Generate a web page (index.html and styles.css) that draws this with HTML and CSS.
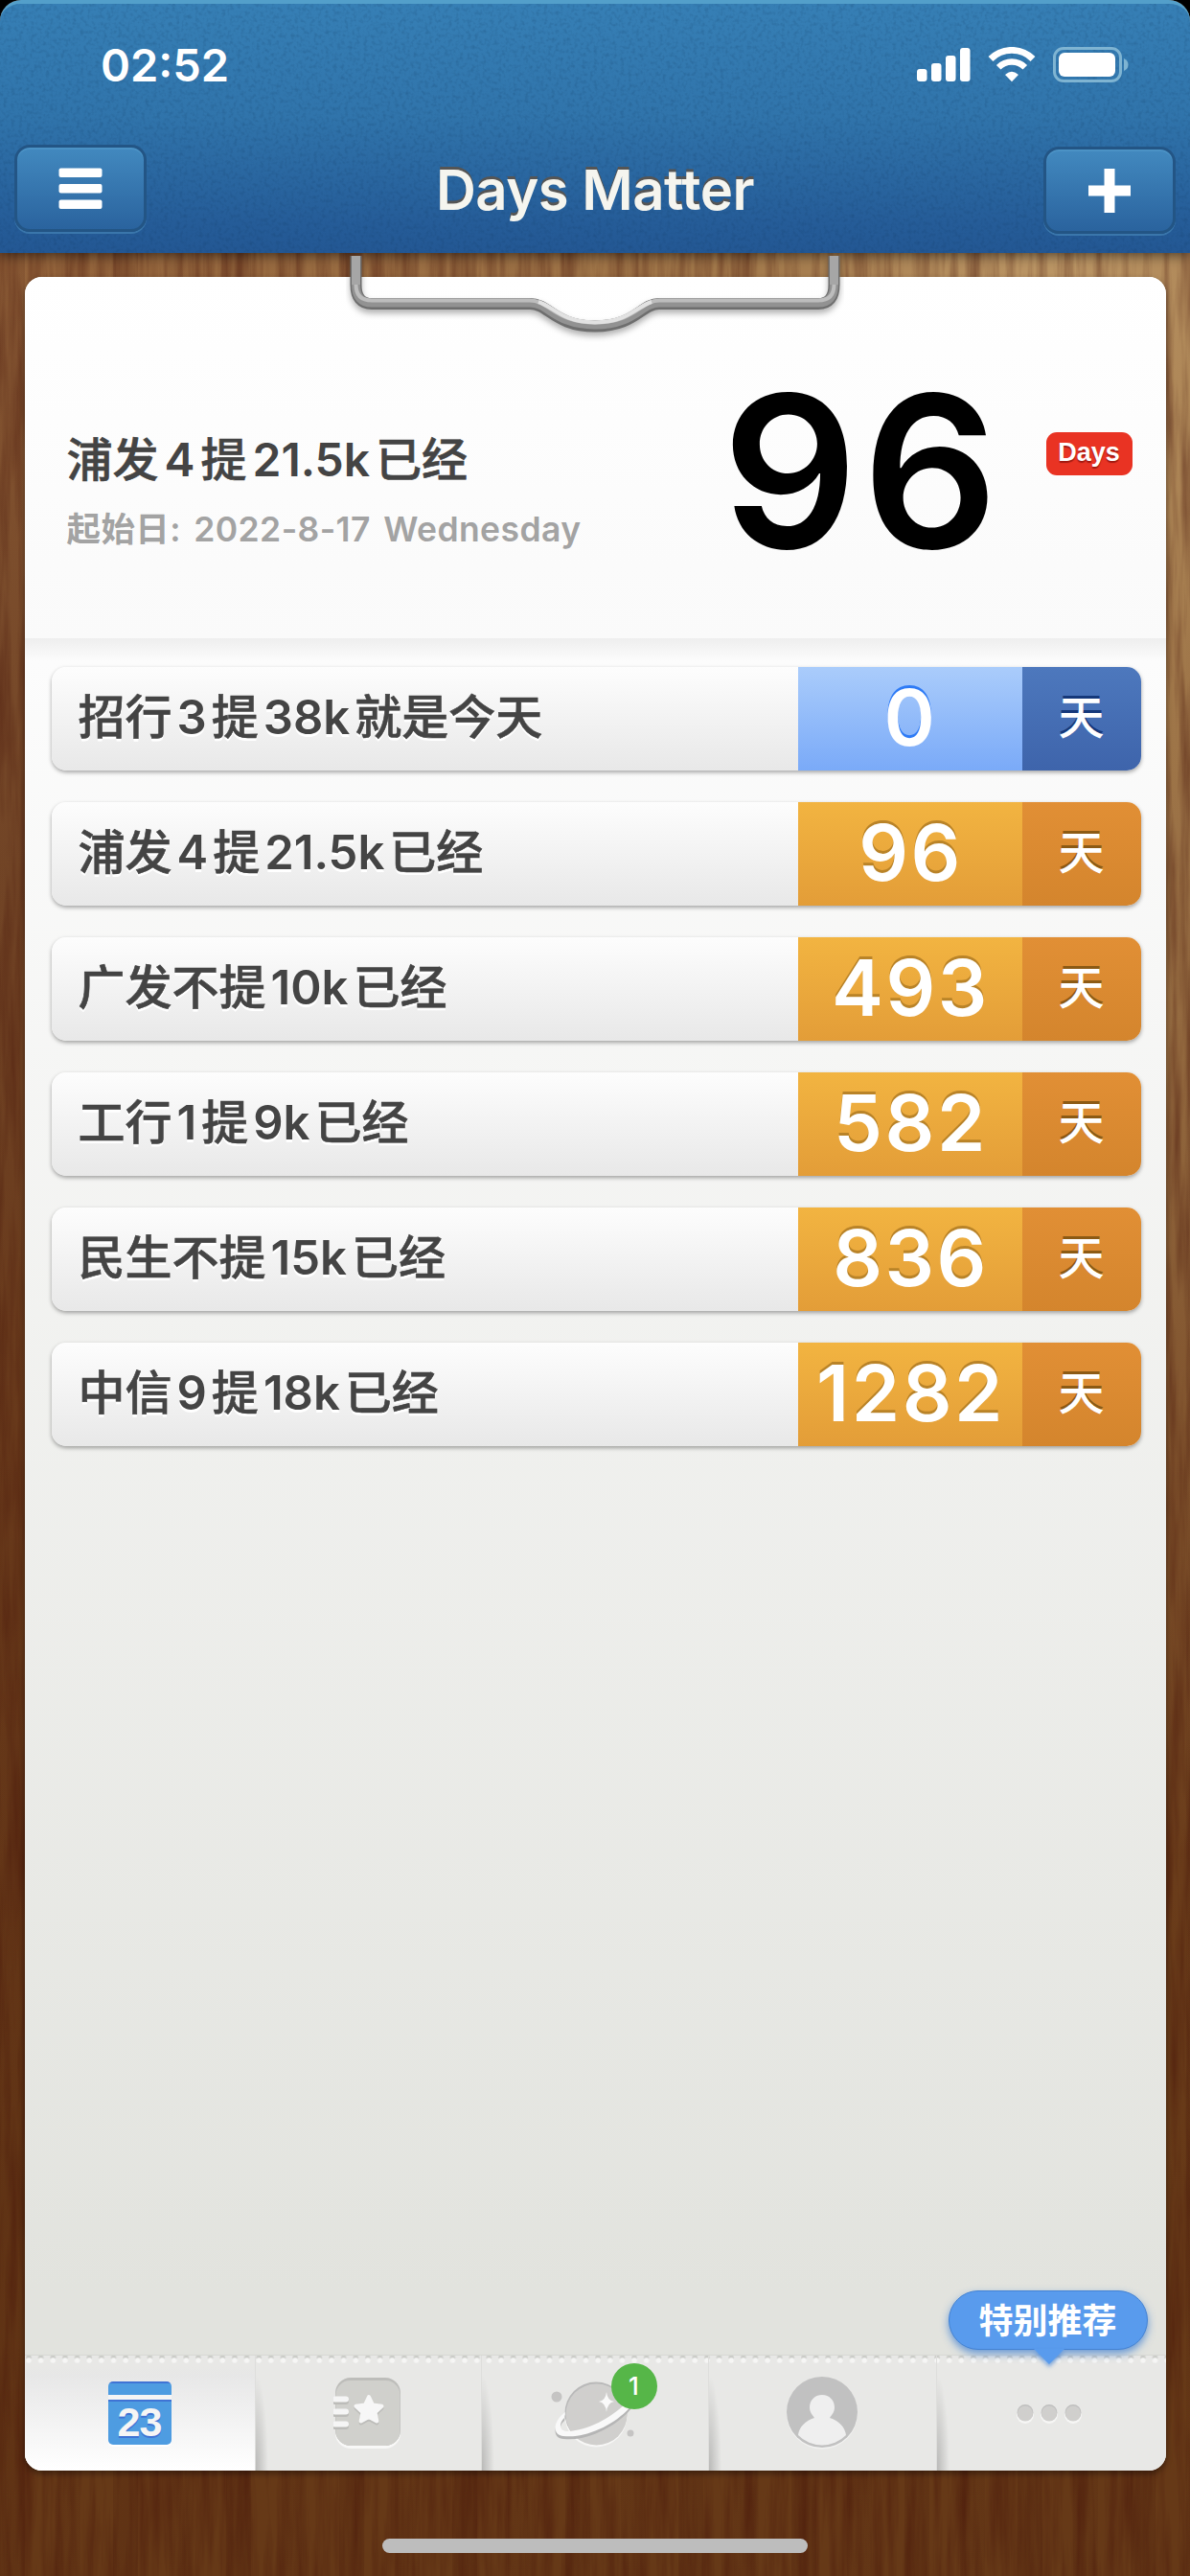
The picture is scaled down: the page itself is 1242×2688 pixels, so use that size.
FILE: index.html
```html
<!DOCTYPE html>
<html lang="zh-CN">
<head>
    <meta charset="UTF-8">
    <meta name="viewport" content="width=device-width, initial-scale=1.0">
    <title>Days Matter</title>
    <link rel="stylesheet" href="styles.css">
</head>
<body>
    <div class="screen">
        <!-- wood grain -->
        <svg class="grain" width="1242" height="2688">
            <filter id="wood" x="0" y="0" width="100%" height="100%" color-interpolation-filters="sRGB">
                <feTurbulence type="fractalNoise" baseFrequency="0.09 0.006" numOctaves="4" seed="8"/>
                <feColorMatrix type="matrix" values="0 0 0 0 0.25  0 0 0 0 0.05  0 0 0 0 0.02  0.8 0 0 0 -0.28"/>
            </filter>
            <rect width="1242" height="2688" filter="url(#wood)"/>
        </svg>

        <header class="header">
            <svg class="grain" width="1242" height="264">
                <filter id="noise" x="0" y="0" width="100%" height="100%" color-interpolation-filters="sRGB">
                    <feTurbulence type="fractalNoise" baseFrequency="0.25" numOctaves="2" seed="3"/>
                    <feColorMatrix type="matrix" values="0 0 0 0 0.05  0 0 0 0 0.2  0 0 0 0 0.35  0.45 0 0 0 -0.2"/>
                </filter>
                <rect width="1242" height="264" filter="url(#noise)"/>
            </svg>
            <div class="status">
                <span class="time">02:52</span>
                <svg class="status-icons" width="222" height="38" viewBox="0 0 222 38">
                    <g fill="#fff">
                        <rect x="0" y="23" width="10.5" height="13" rx="3"/>
                        <rect x="15" y="17" width="10.5" height="19" rx="3"/>
                        <rect x="30" y="9" width="10.5" height="27" rx="3"/>
                        <rect x="45" y="1" width="10.5" height="35" rx="3"/>
                        <path d="M99 36.2 L92.5 29.6 Q92 29 92.6 28.4 Q99 23.2 105.4 28.4 Q106 29 105.5 29.6Z"/>
                    </g>
                    <g fill="none" stroke="#fff">
                        <path d="M77 12.5 A31 31 0 0 1 121 12.5" stroke-width="6.8"/>
                        <path d="M85.2 21.2 A19.5 19.5 0 0 1 112.8 21.2" stroke-width="6.5"/>
                    </g>
                    <rect x="143.5" y="1.5" width="69" height="34" rx="9.5" fill="none" stroke="#7fb4d2" stroke-width="3"/>
                    <rect x="148" y="6" width="59" height="25" rx="6" fill="#fff"/>
                    <path d="M216 12 Q220.500 14 220.500 18.500 Q220.500 23 216 25Z" fill="#7fb4d2"/>
                </svg>
            </div>
            <div class="navbar">
                <button class="nav-btn menu-btn" aria-label="Menu">
                    <svg width="46" height="46" viewBox="0 0 46 46" fill="#fff">
                        <rect x="0.5" y="1.5" width="45" height="9.5" rx="2"/>
                        <rect x="0.5" y="18" width="45" height="9.5" rx="2"/>
                        <rect x="0.5" y="34.5" width="45" height="9.5" rx="2"/>
                    </svg>
                </button>
                <h1>Days Matter</h1>
                <button class="nav-btn add-btn" aria-label="Add">
                    <svg width="46" height="46" viewBox="0 0 46 46" fill="#fff">
                        <path d="M17.500 0h11v17.500H45v11H28.500V46h-11V28.500H1v-11h16.500z"/>
                    </svg>
                </button>
            </div>
        </header>

        <main class="paper">
            <svg class="clip" width="520" height="90" viewBox="0 0 520 90">
                <g fill="none">
                    <path class="clip-shadow" d="M10.500 0V30Q10.500 50 27 50H192C212 50 218 73.500 260 73.500S308 50 327 50H493Q509.500 50 509.500 30V0" stroke="#6e6e6e" stroke-width="12"/>
                    <path d="M10.500 0V30Q10.500 49 27 49H192C212 49 218 72 260 72S308 49 327 49H493Q509.500 49 509.500 30V0" stroke="#929292" stroke-width="9"/>
                    <path d="M10.500 0V30Q10.500 46.500 27 46.500H192C212 46.500 218 69.500 260 69.500S308 46.500 327 46.500H493Q509.500 46.500 509.500 30V0" stroke="#bdbdbd" stroke-width="4"/>
                    <path d="M201 48C217 53 226 69.500 260 69.500S303 53 319 48" stroke="#e2e2e2" stroke-width="4"/>
                    <path d="M10.500 0V30M509.500 0V30" stroke="#a6a6a6" stroke-width="9"/>
                </g>
            </svg>

            <section class="hero">
                <div class="hero-text">
                    <h2>浦发<b>4</b>提<b>21.5k</b>已经</h2>
                    <p>起始日: 2022-8-17 Wednesday</p>
                </div>
                <div class="hero-count">96</div>
                <span class="hero-unit">Days</span>
            </section>

            <ul class="list">
                <li class="row today"><span class="name">招行<b>3</b>提<b>38k</b>就是今天</span><span class="num">0</span><span class="unit">天</span></li>
                <li class="row"><span class="name">浦发<b>4</b>提<b>21.5k</b>已经</span><span class="num">96</span><span class="unit">天</span></li>
                <li class="row"><span class="name">广发不提<b>10k</b>已经</span><span class="num">493</span><span class="unit">天</span></li>
                <li class="row"><span class="name">工行<b>1</b>提<b>9k</b>已经</span><span class="num">582</span><span class="unit">天</span></li>
                <li class="row"><span class="name">民生不提<b>15k</b>已经</span><span class="num">836</span><span class="unit">天</span></li>
                <li class="row"><span class="name">中信<b>9</b>提<b>18k</b>已经</span><span class="num">1282</span><span class="unit">天</span></li>
            </ul>

            <nav class="tabs">
                <a class="tab active">
                    <span class="calendar"><span class="calendar-day">23</span></span>
                </a>
                <a class="tab">
                    <svg width="72" height="76" viewBox="0 0 72 76">
                        <rect x="2" y="4" width="68" height="71" rx="16" fill="#f8f8f7"/>
                        <rect x="2" y="1" width="68" height="71" rx="16" fill="#bdbdba"/>
                        <rect x="2.5" y="4" width="67" height="68" rx="15" fill="#d0d0cc"/>
                        <path d="M2 26h11M2 39h11M2 52h11" stroke="#bcbcb9" stroke-width="6" stroke-linecap="round"/>
                        <path d="M2 23.500h11M2 36.500h11M2 49.500h11" stroke="#f5f5f5" stroke-width="6" stroke-linecap="round"/>
                        <path d="M37 23l4 8.500 9.500 1.200-7 6.500 1.800 9.300-8.300-4.600-8.300 4.600 1.800-9.300-7-6.500 9.500-1.200z" fill="#bcbcb9" stroke="#bcbcb9" stroke-width="4" stroke-linejoin="round"/>
                        <path d="M37 21l4 8.500 9.500 1.200-7 6.500 1.800 9.300-8.300-4.600-8.300 4.600 1.800-9.300-7-6.500 9.500-1.200z" fill="#f7f7f7" stroke="#f7f7f7" stroke-width="4" stroke-linejoin="round"/>
                    </svg>
                </a>
                <a class="tab">
                    <svg width="100" height="76" viewBox="0 0 100 76">
                        <circle cx="51" cy="41" r="32.5" fill="#f7f7f6"/>
                        <circle cx="51" cy="38" r="32.5" fill="#b9b9b9"/>
                        <circle cx="51.500" cy="39.500" r="32" fill="#d0cfcd"/>
                        <circle cx="10" cy="21" r="5.500" fill="#c5c4c3"/>
                        <circle cx="87" cy="59" r="3.500" fill="#c5c4c3"/>
                        <path d="M19 40C7 48 4 64 17 65 42 68 74 51 88 33L84 30C66 48 42 58 22 59 12 59 12 51 18 46Z" fill="#b5b5b5"/>
                        <path d="M19 37C7 45 4 61 17 62 42 65 74 48 88 30L84 26C66 44 42 56 22 57 12 57 12 49 18 43Z" fill="#f9f9f9"/>
                        <path d="M62 16Q63 25 70 26 63 27 62 37 61 27 54 26 61 25 62 16Z" fill="#fafafa"/>
                    </svg>
                    <span class="badge">1</span>
                </a>
                <a class="tab">
                    <svg width="76" height="76" viewBox="0 0 76 76">
                        <circle cx="38" cy="38.500" r="37" fill="#f2f2f1"/>
                        <circle cx="38" cy="37" r="37" fill="#c1c1c1"/>
                        <path d="M38 19C46 19 51 25 51 32 51 37 48 40 46 43 56 46 62 53 63 61A35 35 0 0 1 13 61C14 53 20 46 30 43 28 40 25 37 25 32 25 25 30 19 38 19Z" fill="#efefef"/>
                    </svg>
                </a>
                <a class="tab more">
                    <svg width="76" height="24" viewBox="0 0 76 24">
                        <g fill="#f6f6f5"><circle cx="13" cy="14" r="9"/><circle cx="38" cy="14" r="9"/><circle cx="63" cy="14" r="9"/></g>
                        <g fill="#bfbfbe"><circle cx="13" cy="11.500" r="8.500"/><circle cx="38" cy="11.500" r="8.500"/><circle cx="63" cy="11.500" r="8.500"/></g>
                        <g fill="#d0cfcd"><circle cx="13" cy="12.500" r="8"/><circle cx="38" cy="12.500" r="8"/><circle cx="63" cy="12.500" r="8"/></g>
                    </svg>
                    <span class="tip">特别推荐</span>
                </a>
            </nav>
        </main>
        <div class="home-bar"></div>
    </div>
</body>
</html>
```
FILE: styles.css
```css
* {
    box-sizing: border-box;
}

body {
    margin: 0;
    background: #000;
    font-family: Inter, "Noto Sans CJK SC", sans-serif;
}

.screen {
    position: relative;
    width: 1242px;
    height: 2688px;
    display: flex;
    flex-direction: column;
    align-items: center;
    overflow: hidden;
    background:
        radial-gradient(ellipse 1100px 1700px at 1100px 250px, #bc9766 0%, rgba(165, 125, 78, 0.85) 30%, rgba(130, 80, 35, 0) 100%),
        repeating-linear-gradient(90deg, rgba(60, 15, 5, 0.14) 0 26px, transparent 26px 58px, rgba(60, 15, 5, 0.08) 58px 84px, transparent 84px 118px),
        linear-gradient(#92623a 264px, #7a4d2b 900px, #6f401e 1500px, #663917 2300px);
}

.grain {
    position: absolute;
    top: 0;
    left: 0;
}

/* header */

.header {
    position: relative;
    width: 100%;
    height: 264px;
    flex: none;
    background: linear-gradient(#367fb5, #3074ab 45%, #255c98 88%, #235793);
    border-top: 4px solid #539fca;
    border-radius: 22px 22px 0 0;
    box-shadow: 0 2px 14px rgba(0, 0, 0, 0.6), 0 -20px 0 0 #000;
    overflow: hidden;
}

.status {
    position: relative;
    display: flex;
    justify-content: space-between;
    padding: 35px 63px 0 105px;
    height: 147px;
}

.time {
    color: #fff;
    font-size: 47px;
    font-weight: 600;
    line-height: 58px;
}

.status-icons {
    margin-top: 10px;
}

.navbar {
    position: relative;
    display: flex;
    justify-content: space-between;
    padding: 0 15px;
}

.nav-btn {
    display: flex;
    align-items: center;
    justify-content: center;
    width: 138px;
    height: 91px;
    padding: 0;
    border: 3px solid #235585;
    border-radius: 16px;
    background: linear-gradient(#4289bf, #2a639e);
    box-shadow: 0 2px 0 #3a76ab, inset 0 2px 0 #4b92c5;
}

.add-btn {
    margin-top: 2px;
}

h1 {
    margin: 10px 0 0;
    color: #f5f5ef;
    font-size: 58px;
    font-weight: 600;
    letter-spacing: -0.5px;
    line-height: 74px;
    text-shadow: 0 -3px 0 #555;
}

/* paper */

.paper {
    position: relative;
    width: 1191px;
    height: 2289px;
    margin-top: 25px;
    flex: none;
    display: flex;
    flex-direction: column;
    border-radius: 18px;
    background: linear-gradient(#fff, #fcfcfc 400px, #e2e3de 2100px);
    box-shadow: 0 3px 6px rgba(0, 0, 0, 0.4);
}

.clip {
    position: absolute;
    top: -22px;
    left: 335px;
}

.clip-shadow {
    filter: drop-shadow(0 4px 3px rgba(0, 0, 0, 0.3));
}

.hero {
    display: flex;
    height: 377px;
    padding: 0 35px 0 44px;
    border-radius: 18px 18px 0 0;
    background: linear-gradient(#fff, #fafafa);
}

.hero-text {
    flex: 1;
    padding-top: 156px;
}

h2 {
    margin: 0;
    color: #444;
    font-size: 48px;
    font-weight: 500;
    line-height: 70px;
    -webkit-text-stroke: 0.6px #444;
}

h2 b {
    margin: 0 6px;
    font-weight: 600;
    -webkit-text-stroke: 0;
}

.hero-text p {
    margin: 12px 0 0;
    color: #a3a3a3;
    font-size: 35.5px;
    font-weight: 600;
    letter-spacing: 0.4px;
    word-spacing: 4px;
    line-height: 52px;
}

.hero-count {
    margin: 68px 45px 0 0;
    font-size: 221px;
    font-weight: 600;
    letter-spacing: 5px;
    line-height: 270px;
}

.hero-unit {
    width: 90px;
    height: 45px;
    margin-top: 162px;
    border-radius: 11px;
    background: #e93323;
    color: #fff;
    font: bold 27px/42px "Liberation Sans", Arial, sans-serif;
    text-align: center;
    text-shadow: 0 2px 1px rgba(90, 0, 0, 0.5);
}

.list {
    flex: 1;
    display: flex;
    flex-direction: column;
    gap: 33px;
    margin: 0;
    padding: 30px 26px 0 28px;
    list-style: none;
    background: linear-gradient(#eee, rgba(250, 250, 250, 0) 24px);
}

.row {
    display: flex;
    height: 108px;
    border-radius: 15px;
    overflow: hidden;
    background: linear-gradient(#fdfdfd, #e8e8e8);
    box-shadow: 0 2px 4px rgba(0, 0, 0, 0.35);
    line-height: 106px;
}

.name {
    flex: 1;
    padding-left: 28px;
    color: #444;
    font-size: 49px;
    font-weight: 500;
    text-shadow: 0 3px 0 #fff;
    white-space: nowrap;
    -webkit-text-stroke: 0.6px #444;
}

.name b {
    margin: 0 5px;
    font-weight: 600;
    -webkit-text-stroke: 0;
}

.num, .unit {
    color: #fff;
    text-align: center;
}

.num {
    width: 234px;
    font-size: 81px;
    font-weight: 600;
    letter-spacing: 2.5px;
    text-indent: 2px;
    background: linear-gradient(#f2b441, #e39d38);
    text-shadow: 0 -3px 0 #b98328;
}

.unit {
    width: 124px;
    font-size: 48px;
    font-weight: 500;
    background: linear-gradient(#e18f35, #d4852d);
    text-shadow: 0 -3px 0 #8c5a14;
}

.today .num {
    background: linear-gradient(#aaccfb, #7aaaf8);
    text-shadow: 0 -3px 0 #2e7bf6;
}

.today .unit {
    background: linear-gradient(#4d78bd, #3e64ab);
    text-shadow: 0 -3px 0 #15387a;
}

/* tab bar */

.tabs {
    display: grid;
    grid-template-columns: 240px 236px 237px 238px 240px;
    height: 120px;
    border-radius: 0 0 18px 18px;
    background:
        radial-gradient(circle at 4px 5px, #f6f6f5 2px, transparent 3.5px) 0 0 / 12.65px 10px repeat-x,
        radial-gradient(circle at 4px 2px, #cbccc8 2px, transparent 3.5px) 0 0 / 12.65px 10px repeat-x,
        #e8e8e6;
    box-shadow: 0 -1px 0 #d8d9d4;
}

.tab {
    position: relative;
    display: flex;
    align-items: center;
    justify-content: center;
}

.tab + .tab {
    background: radial-gradient(ellipse 13px 100px at 0 100%, rgba(0, 0, 0, 0.2), transparent);
    border-left: 1px solid #dededc;
}

.tab.active {
    border-radius: 0 0 0 18px;
    background: linear-gradient(transparent 12px, #e7e7e7 20px, #fff);
}

.tab.more {
    padding-right: 5px;
}

.calendar {
    width: 66px;
    height: 66px;
    border-radius: 5px;
    background: linear-gradient(#3f73d5 2px, #4e9ce1 2px 14px, #f5f5f5 14px 19px, #3f73d5 19px 21px, #4e9ce1 21px);
    box-shadow: 0 2px 0 #fff;
    text-align: center;
}

.calendar-day {
    display: block;
    padding-top: 18px;
    color: #f5f5f5;
    font: bold 43px/48px "Liberation Sans", Arial, sans-serif;
    letter-spacing: -1px;
    text-shadow: 0 2px 0 #3f73d5;
}

.badge {
    position: absolute;
    top: 8px;
    left: 135px;
    width: 48px;
    height: 48px;
    border-radius: 50%;
    background: #56b648;
    color: #fff;
    font-size: 26px;
    font-weight: 500;
    line-height: 48px;
    text-align: center;
}

.tip {
    position: absolute;
    top: -68px;
    left: 12px;
    width: 208px;
    height: 62px;
    border: 1px solid #4382d3;
    border-radius: 31px;
    background: #599bed;
    box-shadow: 0 4px 8px rgba(50, 120, 210, 0.7);
    color: #fff;
    font-size: 36px;
    font-weight: 700;
    line-height: 62px;
    text-align: center;
}

.tip::after {
    content: "";
    position: absolute;
    top: 60px;
    left: 88px;
    border: 16px solid transparent;
    border-top-color: #599bed;
    border-bottom: none;
    filter: drop-shadow(0 3px 2px rgba(50, 120, 210, 0.6));
}

.home-bar {
    position: relative;
    width: 444px;
    height: 15px;
    margin-top: 71px;
    flex: none;
    border-radius: 8px;
    background: #bdbdbd;
}
```
